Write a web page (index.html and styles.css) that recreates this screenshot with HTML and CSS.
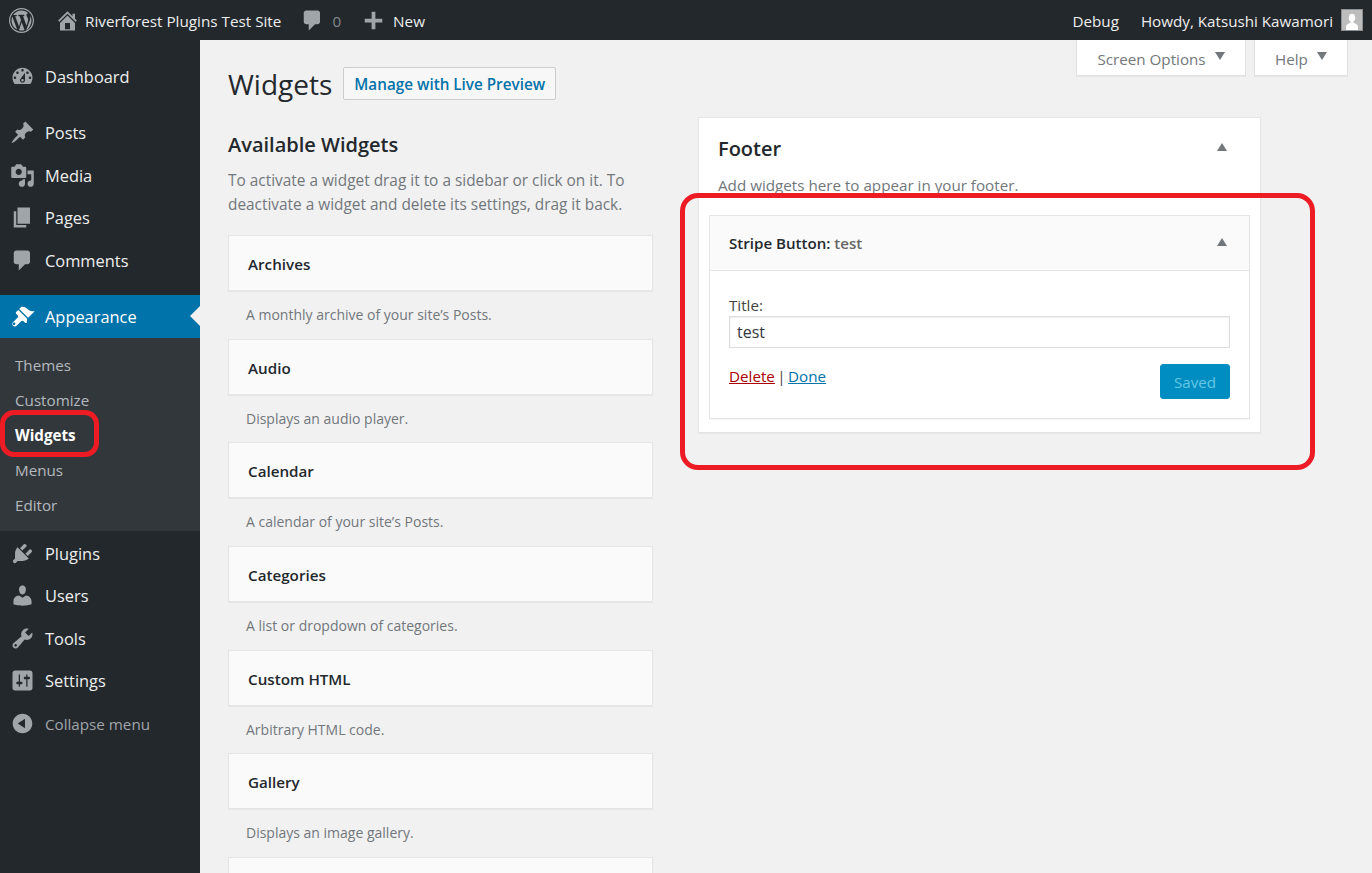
FILE: index.html
```html
<!DOCTYPE html>
<html lang="en">
<head>
    <meta charset="UTF-8">
    <title>Widgets ‹ Riverforest Plugins Test Site</title>
    <link rel="stylesheet" href="styles.css">
</head>
<body>
    <header class="adminbar">
        <div class="bar-left">
            <svg class="bar-logo" viewBox="0 0 20 20"><path d="M20 10c0-5.52-4.48-10-10-10S0 4.48 0 10s4.48 10 10 10 10-4.48 10-10zM10 1.01c4.97 0 8.99 4.02 8.99 8.99s-4.02 8.99-8.99 8.99S1.01 14.97 1.01 10 5.03 1.01 10 1.01zM8.01 14.82L4.96 6.61c.49-.03 1.05-.08 1.05-.08.43-.05.38-1.01-.06-.99 0 0-1.29.1-2.13.1-.15 0-.33 0-.52-.01 1.44-2.17 3.9-3.6 6.7-3.6 2.09 0 3.99.79 5.41 2.09-.6-.08-1.45.35-1.45 1.42 0 .66.38 1.22.79 1.88.31.54.5 1.22.5 2.21 0 1.34-1.27 4.48-1.27 4.48l-2.71-7.5c.48-.03.75-.16.75-.16.43-.05.38-1.1-.05-1.08 0 0-1.3.11-2.14.11-.78 0-2.11-.11-2.11-.11-.43-.02-.48 1.06-.05 1.08l.84.08 1.12 3.04zm6.02 2.15L16.64 10s.67-1.69.39-3.81c.63 1.14.94 2.42.94 3.81 0 2.96-1.56 5.58-3.94 7.97zM2.68 6.77L6.5 17.25c-2.67-1.3-4.47-4.08-4.47-7.25 0-1.16.2-2.23.65-3.23zm7.45 4.53l2.29 6.25c.02.05.05.09.07.13-.77.27-1.6.42-2.46.42-.72 0-1.42-.11-2.08-.3z"/></svg>
            <svg class="bar-icon home-icon" viewBox="0 0 20 20"><path d="M16 8.5l1.53 1.53-1.06 1.06L10 4.62l-6.47 6.47-1.06-1.06L10 2.5l4 4v-2h2v4zm-6-2.46l6 5.99V18H4v-5.97zM12 17v-5H8v5h4z"/></svg>
            <span class="site-name">Riverforest Plugins Test Site</span>
            <svg class="bar-icon bubble-icon" viewBox="0 0 20 20"><path d="M5 2h9c1.1 0 2 .9 2 2v7c0 1.1-.9 2-2 2h-2l-5 5v-5H5c-1.1 0-2-.9-2-2V4c0-1.1.9-2 2-2z"/></svg>
            <span class="comment-count">0</span>
            <svg class="bar-icon plus-icon" viewBox="0 0 20 20"><path d="M17 8.5v3h-5.5V17h-3v-5.5H3v-3h5.5V3h3v5.5z"/></svg>
            <span>New</span>
        </div>
        <div class="bar-right">
            <span class="debug">Debug</span>
            <span>Howdy, Katsushi Kawamori</span>
            <svg class="avatar" viewBox="0 0 22 22"><rect width="22" height="22" fill="#bdbdbd"/><path d="M11 4c2.3 0 3.6 1.9 3.6 4.3 0 2-1 3.7-2.1 4.5v1.1c2.4.8 5 1.9 5 4.1v4H4.5v-4c0-2.2 2.6-3.3 5-4.1v-1.1c-1.1-.8-2.1-2.5-2.1-4.5C7.4 5.9 8.7 4 11 4z" fill="#fff"/></svg>
        </div>
    </header>

    <div class="layout">
        <nav class="sidebar">
            <a class="menu-item first"><svg viewBox="0 0 20 20"><path d="M3.76 16h12.48c1.1-1.37 1.76-3.11 1.76-5 0-4.42-3.58-8-8-8s-8 3.58-8 8c0 1.89.66 3.63 1.76 5zM10 4c.55 0 1 .45 1 1s-.45 1-1 1-1-.45-1-1 .45-1 1-1zM6 6c.55 0 1 .45 1 1s-.45 1-1 1-1-.45-1-1 .45-1 1-1zm8 0c.55 0 1 .45 1 1s-.45 1-1 1-1-.45-1-1 .45-1 1-1zm-5.37 5.55L12 7v6c0 1.1-.9 2-2 2s-2-.9-2-2c0-.57.24-1.08.63-1.45zM4 10c.55 0 1 .45 1 1s-.45 1-1 1-1-.45-1-1 .45-1 1-1zm12 0c.55 0 1 .45 1 1s-.45 1-1 1-1-.45-1-1 .45-1 1-1zm-5 3c0-.55-.45-1-1-1s-1 .45-1 1 .45 1 1 1 1-.45 1-1z"/></svg>Dashboard</a>
            <a class="menu-item group-start"><svg viewBox="0 0 20 20"><path d="M10.44 3.02l1.82-1.82 6.36 6.35-1.83 1.82c-1.05-.68-2.48-.57-3.41.36l-.75.75c-.92.93-1.04 2.35-.35 3.41l-1.83 1.82-2.41-2.41-2.8 2.79c-.42.42-3.38 2.71-3.8 2.29s1.86-3.39 2.28-3.81l2.79-2.79L4.1 9.36l1.83-1.82c1.05.69 2.48.57 3.4-.36l.75-.75c.93-.92 1.05-2.35.36-3.41z"/></svg>Posts</a>
            <a class="menu-item"><svg viewBox="0 0 20 20"><path d="M13 11V4c0-.55-.45-1-1-1h-1.67L9 1H5L3.67 3H2c-.55 0-1 .45-1 1v7c0 .55.45 1 1 1h10c.55 0 1-.45 1-1zM7 4.5c1.38 0 2.5 1.12 2.5 2.5S8.38 9.5 7 9.5 4.5 8.38 4.5 7 5.62 4.5 7 4.5zM14 6h5v10.5c0 1.38-1.12 2.5-2.5 2.5S14 17.88 14 16.5s1.12-2.5 2.5-2.5c.17 0 .34.02.5.05V9h-3V6zm-4 8.05V13h2v3.5c0 1.38-1.12 2.5-2.5 2.5S7 17.88 7 16.5 8.12 14 9.5 14c.17 0 .34.02.5.05z"/></svg>Media</a>
            <a class="menu-item"><svg viewBox="0 0 20 20"><path d="M6 15V2h10v13H6zm-1 1h8v2H3V5h2v11z"/></svg>Pages</a>
            <a class="menu-item"><svg viewBox="0 0 20 20"><path d="M5 2h9c1.1 0 2 .9 2 2v7c0 1.1-.9 2-2 2h-2l-5 5v-5H5c-1.1 0-2-.9-2-2V4c0-1.1.9-2 2-2z"/></svg>Comments</a>
            <a class="menu-item current"><svg viewBox="0 0 20 20"><path d="M14.48 11.06L7.41 3.99l1.5-1.5c.5-.56 2.3-.47 3.51.32 1.21.8 1.43 1.28 2.91 2.1 1.18.64 2.45 1.26 4.45.85zm-.71.71L6.7 4.7 4.93 6.47c-.39.39-.39 1.02 0 1.41l1.06 1.06c.59.59.59 1.54 0 2.12l-3.54 3.54c-.78.78-.78 2.05 0 2.83.78.78 2.05.78 2.83 0l3.54-3.54c.58-.58 1.53-.58 2.12 0l1.06 1.06c.39.39 1.02.39 1.41 0zM4 16.5c-.39.39-1.02.39-1.41 0-.39-.39-.39-1.02 0-1.41.39-.39 1.02-.39 1.41 0 .39.39.39 1.02 0 1.41z"/></svg>Appearance</a>
            <div class="submenu">
                <a>Themes</a>
                <a>Customize</a>
                <a class="sub-current">Widgets</a>
                <a>Menus</a>
                <a>Editor</a>
            </div>
            <a class="menu-item"><svg viewBox="0 0 20 20"><path d="M13.11 4.36L9.87 7.6 8 5.73l3.24-3.24c.35-.34 1.05-.2 1.56.32.52.51.66 1.21.31 1.55zm-8 1.77l.91-1.12 9.01 9.01-1.19.84c-.71.71-2.63 1.16-3.82 1.16H6.14L4.9 17.26c-.59.59-1.54.59-2.12 0-.59-.58-.59-1.53 0-2.12l1.24-1.24v-3.88c0-1.13.4-3.19 1.09-3.89zm7.26 3.97l3.24-3.24c.34-.35 1.04-.21 1.55.31.52.51.66 1.21.31 1.55l-3.24 3.25z"/></svg>Plugins</a>
            <a class="menu-item"><svg viewBox="0 0 20 20"><path d="M10 9.25c-2.27 0-2.73-3.44-2.73-3.44C7 4.02 7.82 2 9.97 2c2.16 0 2.98 2.02 2.71 3.81 0 0-.41 3.44-2.68 3.44zm0 2.57L12.72 10c2.39 0 4.52 2.33 4.52 4.53v2.49s-3.65 1.13-7.24 1.13c-3.65 0-7.24-1.13-7.24-1.13v-2.49c0-2.25 1.94-4.48 4.47-4.48z"/></svg>Users</a>
            <a class="menu-item"><svg viewBox="0 0 20 20"><path d="M16.68 9.77c-1.34 1.34-3.3 1.67-4.95.99l-5.41 6.52c-.99.99-2.59.99-3.58 0s-.99-2.59 0-3.57l6.52-5.42c-.68-1.65-.35-3.61.99-4.95 1.28-1.28 3.12-1.62 4.72-1.06l-2.89 2.89 2.82 2.82 2.86-2.87c.53 1.58.18 3.39-1.08 4.65zM3.81 16.21c.4.39 1.04.39 1.43 0 .4-.4.4-1.04 0-1.43-.39-.4-1.03-.4-1.43 0-.39.39-.39 1.03 0 1.43z"/></svg>Tools</a>
            <a class="menu-item"><svg viewBox="0 0 20 20"><path d="M18 16V4c0-1.1-.9-2-2-2H4c-1.1 0-2 .9-2 2v12c0 1.1.9 2 2 2h12c1.1 0 2-.9 2-2zM8 11h1c.55 0 1 .45 1 1s-.45 1-1 1H8v1.5c0 .28-.22.5-.5.5s-.5-.22-.5-.5V13H6c-.55 0-1-.45-1-1s.45-1 1-1h1V5.5c0-.28.22-.5.5-.5s.5.22.5.5V11zm5-2h-1c-.55 0-1-.45-1-1s.45-1 1-1h1V5.5c0-.28.22-.5.5-.5s.5.22.5.5V7h1c.55 0 1 .45 1 1s-.45 1-1 1h-1v5.5c0 .28-.22.5-.5.5s-.5-.22-.5-.5V9z"/></svg>Settings</a>
            <a class="menu-item collapse"><svg viewBox="0 0 20 20"><path d="M10 2.16c4.33 0 7.84 3.51 7.84 7.84s-3.51 7.84-7.84 7.84S2.16 14.33 2.16 10C2.16 5.71 5.71 2.16 10 2.16zm2 11.72V6.12L6.18 9.97z"/></svg>Collapse menu</a>
        </nav>

        <main class="main">
            <div class="screen-tabs">
                <button class="screen-tab options-tab">Screen Options<i class="arrow-down"></i></button>
                <button class="screen-tab help-tab">Help<i class="arrow-down"></i></button>
            </div>

            <div class="page-title">
                <h1>Widgets</h1>
                <a class="title-action">Manage with Live Preview</a>
            </div>

            <div class="columns">
                <section class="available">
                    <h2>Available Widgets</h2>
                    <p class="available-desc">To activate a widget drag it to a sidebar or click on it. To deactivate a widget and delete its settings, drag it back.</p>

                    <div class="widget-item"><div class="widget-name">Archives</div><p>A monthly archive of your site’s Posts.</p></div>
                    <div class="widget-item"><div class="widget-name">Audio</div><p>Displays an audio player.</p></div>
                    <div class="widget-item"><div class="widget-name">Calendar</div><p>A calendar of your site’s Posts.</p></div>
                    <div class="widget-item"><div class="widget-name">Categories</div><p>A list or dropdown of categories.</p></div>
                    <div class="widget-item"><div class="widget-name">Custom HTML</div><p>Arbitrary HTML code.</p></div>
                    <div class="widget-item"><div class="widget-name">Gallery</div><p>Displays an image gallery.</p></div>
                    <div class="widget-name"></div>
                </section>

                <section class="sidebar-box">
                    <div class="box-head">
                        <h2>Footer</h2>
                        <i class="arrow-up"></i>
                    </div>
                    <p class="box-desc">Add widgets here to appear in your footer.</p>

                    <div class="open-widget">
                        <div class="open-head">
                            <span><b>Stripe Button:</b> <span class="in-title">test</span></span>
                            <i class="arrow-up"></i>
                        </div>
                        <div class="open-body">
                            <label for="title">Title:</label>
                            <input type="text" id="title" value="test">
                            <div class="open-actions">
                                <div class="action-links"><a class="delete-link">Delete</a> | <a class="done-link">Done</a></div>
                                <button class="saved-button">Saved</button>
                            </div>
                        </div>
                    </div>
                </section>
            </div>
        </main>
    </div>

    <div class="mark mark-menu"></div>
    <div class="mark mark-widget"></div>
</body>
</html>
```

FILE: styles.css
```css
* {
    box-sizing: border-box;
}

html, body {
    height: 100%;
    overflow: hidden;
}

body {
    margin: 0;
    background-color: #f1f1f1;
    font-family: "Open Sans", "Liberation Sans", sans-serif;
    font-size: 15.2px;
    color: #444;
}

/* top bar */
.adminbar {
    display: flex;
    justify-content: space-between;
    align-items: center;
    height: 40px;
    padding: 0 9px;
    background-color: #23282d;
    color: #eee;
    font-size: 15.25px;
}

.adminbar span {
    padding-top: 2px;
}

.bar-left, .bar-right {
    display: flex;
    align-items: center;
}

.bar-right {
    font-size: 15.2px;
}

.adminbar svg {
    fill: #a0a5aa;
}

.bar-logo {
    width: 25px;
    height: 25px;
    margin-right: 21px;
}

.bar-icon {
    width: 25px;
    height: 25px;
}

.home-icon {
    margin-right: 5px;
}

.bubble-icon {
    margin-left: 19px;
    margin-right: 7px;
}

.comment-count {
    color: #82878c;
}

.plus-icon {
    margin-left: 20px;
    margin-right: 7px;
}

.debug {
    margin-right: 22px;
}

.avatar {
    width: 22px;
    height: 22px;
    margin-left: 8px;
    border: 1px solid #8c8f94;
}

/* left menu */
.layout {
    display: flex;
    height: calc(100% - 40px);
}

.sidebar {
    flex: none;
    width: 200px;
    padding-top: 15.5px;
    background-color: #23282d;
}

.menu-item {
    display: flex;
    align-items: center;
    position: relative;
    height: 42.5px;
    padding-left: 10px;
    color: #eee;
    font-size: 16.4px;
}

.menu-item svg {
    flex: none;
    width: 25px;
    height: 25px;
    margin-right: 10px;
    fill: #a0a5aa;
}

.group-start {
    margin-top: 13.5px;
}

.current {
    margin-top: 13.5px;
    background-color: #0073aa;
    color: #fff;
}

.current svg {
    fill: #fff;
}

.current::after {
    content: "";
    position: absolute;
    right: 0;
    top: 50%;
    margin-top: -10px;
    border: 10px solid transparent;
    border-right-color: #f1f1f1;
}

.submenu {
    display: flex;
    flex-direction: column;
    margin-bottom: 1.5px;
    padding: 10.5px 0 7.5px 15px;
    background-color: #32373c;
    color: #b4b9be;
    font-size: 15.2px;
}

.submenu a {
    height: 35px;
    line-height: 35px;
}

.sub-current {
    color: #fff;
    font-weight: 700;
}

.collapse {
    margin-top: 0.5px;
    color: #a0a5aa;
    font-size: 15.2px;
}

/* page area */
.main {
    flex: 1;
    min-width: 0;
    overflow: hidden;
    padding-left: 28px;
}

.screen-tabs {
    display: flex;
    justify-content: flex-end;
    gap: 8px;
    height: 0;
    padding-right: 24px;
}

.screen-tab {
    display: flex;
    align-items: center;
    justify-content: center;
    flex: none;
    height: 36px;
    padding: 2px 0 0;
    border: 1px solid #e1e1e1;
    border-top: none;
    background-color: #fff;
    box-shadow: 0 1px 1px rgba(0, 0, 0, 0.04);
    color: #72777c;
    font-family: inherit;
    font-size: 15.2px;
}

.options-tab {
    width: 170px;
}

.help-tab {
    width: 94px;
}

.arrow-down {
    margin-left: 9px;
    margin-top: -5px;
    border-left: 5.5px solid transparent;
    border-right: 5.5px solid transparent;
    border-top: 8px solid #72777c;
}

.arrow-up {
    margin-top: -3px;
    border-left: 5.5px solid transparent;
    border-right: 5.5px solid transparent;
    border-bottom: 8px solid #72777c;
}

.page-title {
    display: flex;
    align-items: center;
    gap: 11px;
    height: 39px;
    margin-top: 24px;
}

h1 {
    margin: 0;
    color: #23282d;
    font-size: 28px;
    font-weight: 400;
}

.title-action {
    display: block;
    height: 33px;
    padding: 0 10px;
    border: 1px solid #ccc;
    border-radius: 2px;
    background-color: #f7f7f7;
    color: #0073aa;
    font-size: 15.25px;
    font-weight: 600;
    line-height: 33px;
}

.columns {
    display: flex;
    align-items: flex-start;
    gap: 45px;
}

.available {
    flex: none;
    width: 425px;
    margin-top: 20px;
}

h2 {
    margin: 0;
    color: #23282d;
    font-size: 20px;
    font-weight: 600;
    line-height: 44px;
}

.available-desc {
    height: 50px;
    margin: 2px 0 16px;
    color: #72777c;
    font-size: 15.4px;
    line-height: 24px;
}

.widget-item {
    height: 103.7px;
}

.widget-item p {
    margin: 0;
    padding: 13px 18px 0;
    color: #72777c;
    font-size: 14px;
    line-height: 22px;
}

.widget-name {
    height: 56px;
    padding-left: 19px;
    border: 1px solid #e5e5e5;
    background-color: #fafafa;
    box-shadow: 0 1px 1px rgba(0, 0, 0, 0.04);
    color: #23282d;
    font-weight: 600;
    line-height: 56px;
}

/* footer sidebar box */
.sidebar-box {
    flex: none;
    width: 563px;
    height: 316px;
    margin-top: 14px;
    padding: 0 10px;
    border: 1px solid #e5e5e5;
    background-color: #fff;
    box-shadow: 0 1px 1px rgba(0, 0, 0, 0.04);
}

.box-head {
    display: flex;
    justify-content: space-between;
    align-items: center;
    height: 61px;
    padding: 0 23px 0 9px;
}

.box-desc {
    height: 36px;
    margin: 0;
    padding-left: 9px;
    color: #72777c;
    font-size: 15.2px;
    line-height: 12px;
}

.open-widget {
    height: 204px;
    border: 1px solid #e5e5e5;
    box-shadow: 0 1px 1px rgba(0, 0, 0, 0.04);
}

.open-head {
    display: flex;
    justify-content: space-between;
    align-items: center;
    height: 55px;
    padding: 0 22px 0 19px;
    border-bottom: 1px solid #e5e5e5;
    background-color: #fafafa;
    color: #23282d;
    font-size: 15.1px;
}

.open-head b {
    font-weight: 600;
}

.in-title {
    color: #666;
    font-weight: 600;
}

.open-body {
    padding: 23px 19px 0;
}

.open-body label {
    display: block;
    height: 22px;
    color: #444;
    line-height: 22px;
}

.open-body input {
    display: block;
    width: 100%;
    height: 32px;
    padding: 0 7px;
    border: 1px solid #ddd;
    box-shadow: inset 0 1px 2px rgba(0, 0, 0, 0.07);
    color: #32373c;
    font-family: inherit;
    font-size: 16px;
}

.open-actions {
    display: flex;
    justify-content: space-between;
    align-items: flex-start;
    margin-top: 16px;
}

.action-links {
    line-height: 24px;
    word-spacing: -1.5px;
}

.delete-link {
    color: #a00;
    text-decoration: underline;
}

.done-link {
    color: #0073aa;
    text-decoration: underline;
}

.saved-button {
    width: 70px;
    height: 35px;
    padding: 0;
    border: 1px solid #008ec2;
    border-radius: 3px;
    background-color: #008ec2;
    color: #66c6e4;
    font-family: inherit;
    font-size: 15.2px;
}

/* red annotation rings drawn over the screenshot */
.mark {
    position: absolute;
    border: 5px solid #ed1c24;
}

.mark-menu {
    left: 0;
    top: 410px;
    width: 99px;
    height: 47px;
    border-radius: 14px;
}

.mark-widget {
    left: 680px;
    top: 193px;
    width: 635px;
    height: 277px;
    border-radius: 18px;
}
```
